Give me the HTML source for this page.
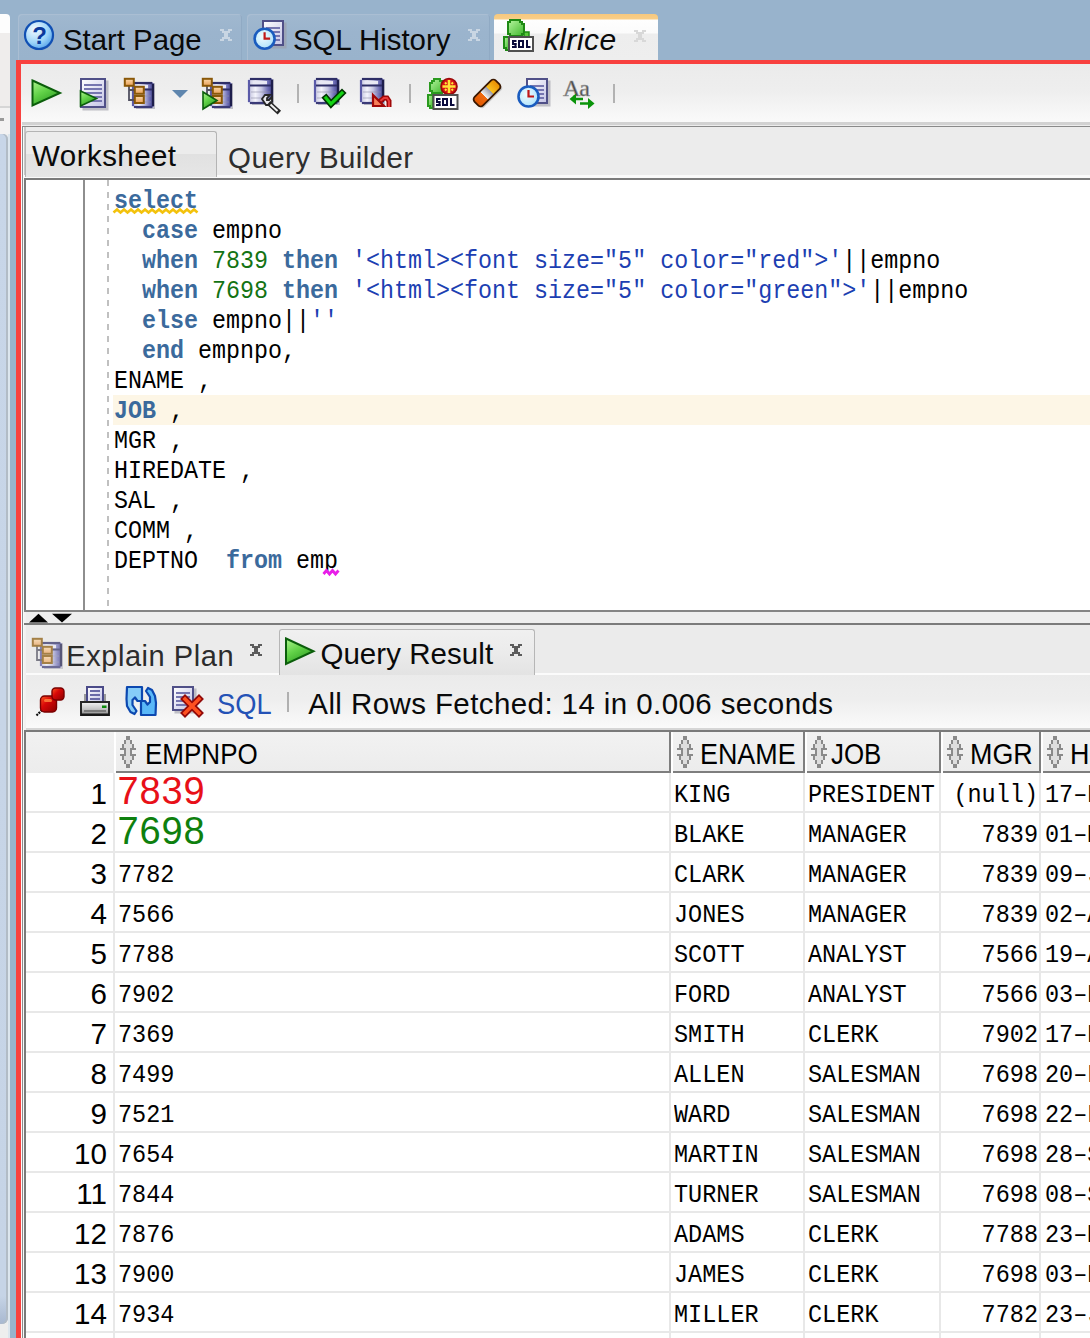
<!DOCTYPE html>
<html><head><meta charset="utf-8">
<style>
html,body{margin:0;padding:0;}
body{width:1090px;height:1338px;overflow:hidden;position:relative;background:#98b3cc;font-family:"Liberation Sans",sans-serif;}
.a{position:absolute;}
.t{position:absolute;white-space:pre;line-height:1;}
</style></head><body>
<div class="a" style="left:0px;top:14px;width:10px;height:20px;background:#fdfdfd;border-top-right-radius:4px;"></div>
<div class="a" style="left:0px;top:33px;width:10px;height:74px;background:#efedec;"></div>
<div class="a" style="left:0px;top:106px;width:10px;height:2px;background:#d6d6d6;"></div>
<div class="a" style="left:0px;top:108px;width:10px;height:27px;background:#f3f2f2;"></div>
<div class="a" style="left:0px;top:118px;width:4px;height:3px;background:#9a9a9a;"></div>
<div class="a" style="left:0px;top:134px;width:10px;height:1204px;background:#eeeeee;"></div>
<div class="a" style="left:8px;top:134px;width:2px;height:1204px;background:#dce6ee;"></div>
<div class="a" style="left:0px;top:134px;width:8px;height:1190px;background:linear-gradient(#c8d6e8 0,#c6d4e6 calc(100% - 28px),#a8b8d0 100%);border-radius:0 5px 6px 0;box-shadow:inset -2px 0 0 #b2bcc6;"></div>
<div class="a" style="left:18px;top:14px;width:224px;height:46px;background:linear-gradient(#a0b8cf,#9bb4cd 40%,#99b3cc);border-radius:4px 4px 0 0;box-shadow:inset 1px 1px 0 #aabed3, inset -1px 0 0 #90aac4;"></div>
<div class="a" style="left:247px;top:14px;width:243px;height:46px;background:linear-gradient(#a0b8cf,#9bb4cd 40%,#99b3cc);border-radius:4px 4px 0 0;box-shadow:inset 1px 1px 0 #aabed3, inset -1px 0 0 #90aac4;"></div>
<div class="a" style="left:494px;top:14px;width:164px;height:46px;background:linear-gradient(#f6c87e 0,#f8ce88 5px,#fefefe 6px,#fbfbfb 19px,#ededed 20px,#eeeeee 46px);border-radius:4px 4px 0 0;"></div>
<div class="t" style="left:63.1px;top:25px;font-family:'Liberation Sans';font-size:30px;letter-spacing:0px;color:#0a0a0a;transform:scaleX(0.9775);transform-origin:0 0;">Start Page</div>
<div class="t" style="left:293.1px;top:25px;font-family:'Liberation Sans';font-size:30px;letter-spacing:0px;color:#0a0a0a;transform:scaleX(0.9804);transform-origin:0 0;">SQL History</div>
<div class="t" style="left:543.8px;top:25px;font-family:'Liberation Sans';font-size:30px;letter-spacing:0.48px;color:#0a0a0a;font-style:italic">klrice</div>
<div class="a" style="left:16px;top:60px;width:1074px;height:4px;background:#f8413f;"></div>
<div class="a" style="left:16px;top:60px;width:4.5px;height:1278px;background:#f8413f;"></div>
<div class="a" style="left:20.5px;top:64px;width:1069.5px;height:1274px;background:#f2f2f2;"></div>
<div class="a" style="left:20.5px;top:64px;width:1.5px;height:1274px;background:#fcfafa;"></div>
<div class="a" style="left:22px;top:126px;width:1px;height:1212px;background:#8c8c8c;"></div>
<div class="a" style="left:23px;top:126px;width:1px;height:1212px;background:#fafafa;"></div>
<div class="a" style="left:21px;top:64px;width:1069px;height:58px;background:linear-gradient(#ebebeb,#eeeeee 45%,#fafafa);"></div>
<div class="a" style="left:22px;top:122px;width:1068px;height:3px;background:#d2d2d2;"></div>
<div class="a" style="left:22px;top:125px;width:1068px;height:1px;background:#ededed;"></div>
<div class="a" style="left:22px;top:126px;width:1068px;height:1px;background:#8a8a8a;"></div>
<div class="a" style="left:24px;top:127px;width:1066px;height:48px;background:#ececec;"></div>
<div class="a" style="left:24px;top:127px;width:2px;height:51px;background:#c8c8c8;"></div>
<div class="a" style="left:24px;top:175px;width:1066px;height:3px;background:#fafafa;"></div>
<div class="a" style="left:25px;top:131px;width:192px;height:46px;background:linear-gradient(#ececec,#ececec 48%,#e1e1e1 50%,#e6e6e6);border:1px solid #b4b4b4;border-bottom:none;border-radius:3px 3px 0 0;box-sizing:border-box;"></div>
<div class="t" style="left:32.1px;top:141px;font-family:'Liberation Sans';font-size:29.5px;letter-spacing:0.44px;color:#0a0a0a;">Worksheet</div>
<div class="t" style="left:228.1px;top:143px;font-family:'Liberation Sans';font-size:29.5px;letter-spacing:0.38px;color:#2e2e2e;">Query Builder</div>
<div class="a" style="left:24px;top:178px;width:1066px;height:2px;background:#7b7b7b;"></div>
<div class="a" style="left:24px;top:178px;width:2px;height:434px;background:#7b7b7b;"></div>
<div class="a" style="left:26px;top:180px;width:1064px;height:430px;background:#ffffff;"></div>
<div class="a" style="left:83px;top:180px;width:2px;height:431px;background:#8e8e8e;"></div>
<div class="a" style="left:107px;top:180px;width:2px;height:430px;background:repeating-linear-gradient(#c0c0c0 0,#c0c0c0 6px,transparent 6px,transparent 12px);"></div>
<div class="a" style="left:113px;top:395px;width:977px;height:30px;background:#fdf6e6;"></div>
<div class="t" style="left:114.0px;top:187.5px;font-family:'Liberation Mono';font-size:26px;letter-spacing:0px;color:#000;transform:scaleX(0.8974);transform-origin:0 0;"><span style="color:#3b6a9c;font-weight:bold">select</span></div>
<div class="t" style="left:114.0px;top:217.5px;font-family:'Liberation Mono';font-size:26px;letter-spacing:0px;color:#000;transform:scaleX(0.8974);transform-origin:0 0;"><span>  </span><span style="color:#3b6a9c;font-weight:bold">case</span><span> empno</span></div>
<div class="t" style="left:114.0px;top:247.5px;font-family:'Liberation Mono';font-size:26px;letter-spacing:0px;color:#000;transform:scaleX(0.8974);transform-origin:0 0;"><span>  </span><span style="color:#3b6a9c;font-weight:bold">when</span><span> </span><span style="color:#137313">7839</span><span> </span><span style="color:#3b6a9c;font-weight:bold">then</span><span> </span><span style="color:#1d3fb2">'&lt;html&gt;&lt;font size="5" color="red"&gt;'</span><span>||empno</span></div>
<div class="t" style="left:114.0px;top:277.5px;font-family:'Liberation Mono';font-size:26px;letter-spacing:0px;color:#000;transform:scaleX(0.8974);transform-origin:0 0;"><span>  </span><span style="color:#3b6a9c;font-weight:bold">when</span><span> </span><span style="color:#137313">7698</span><span> </span><span style="color:#3b6a9c;font-weight:bold">then</span><span> </span><span style="color:#1d3fb2">'&lt;html&gt;&lt;font size="5" color="green"&gt;'</span><span>||empno</span></div>
<div class="t" style="left:114.0px;top:307.5px;font-family:'Liberation Mono';font-size:26px;letter-spacing:0px;color:#000;transform:scaleX(0.8974);transform-origin:0 0;"><span>  </span><span style="color:#3b6a9c;font-weight:bold">else</span><span> empno||</span><span style="color:#1d3fb2">''</span></div>
<div class="t" style="left:114.0px;top:337.5px;font-family:'Liberation Mono';font-size:26px;letter-spacing:0px;color:#000;transform:scaleX(0.8974);transform-origin:0 0;"><span>  </span><span style="color:#3b6a9c;font-weight:bold">end</span><span> empnpo,</span></div>
<div class="t" style="left:114.0px;top:367.5px;font-family:'Liberation Mono';font-size:26px;letter-spacing:0px;color:#000;transform:scaleX(0.8974);transform-origin:0 0;"><span>ENAME ,</span></div>
<div class="t" style="left:114.0px;top:397.5px;font-family:'Liberation Mono';font-size:26px;letter-spacing:0px;color:#000;transform:scaleX(0.8974);transform-origin:0 0;"><span style="color:#3b6a9c;font-weight:bold">JOB</span><span> ,</span></div>
<div class="t" style="left:114.0px;top:427.5px;font-family:'Liberation Mono';font-size:26px;letter-spacing:0px;color:#000;transform:scaleX(0.8974);transform-origin:0 0;"><span>MGR ,</span></div>
<div class="t" style="left:114.0px;top:457.5px;font-family:'Liberation Mono';font-size:26px;letter-spacing:0px;color:#000;transform:scaleX(0.8974);transform-origin:0 0;"><span>HIREDATE ,</span></div>
<div class="t" style="left:114.0px;top:487.5px;font-family:'Liberation Mono';font-size:26px;letter-spacing:0px;color:#000;transform:scaleX(0.8974);transform-origin:0 0;"><span>SAL ,</span></div>
<div class="t" style="left:114.0px;top:517.5px;font-family:'Liberation Mono';font-size:26px;letter-spacing:0px;color:#000;transform:scaleX(0.8974);transform-origin:0 0;"><span>COMM ,</span></div>
<div class="t" style="left:114.0px;top:547.5px;font-family:'Liberation Mono';font-size:26px;letter-spacing:0px;color:#000;transform:scaleX(0.8974);transform-origin:0 0;"><span>DEPTNO  </span><span style="color:#3b6a9c;font-weight:bold">from</span><span> emp</span></div>
<svg class="a" style="left:0;top:0" width="1090" height="700"><path d="M113.5 212.5 l3.5 -3 l3.5 3 l3.5 -3 l3.5 3 l3.5 -3 l3.5 3 l3.5 -3 l3.5 3 l3.5 -3 l3.5 3 l3.5 -3 l3.5 3 l3.5 -3 l3.5 3 l3.5 -3 l3.5 3 l3.5 -3 l3.5 3 l3.5 -3 l3.5 3 l3.5 -3 l3.5 3 l3.5 -3 l3.5 3" stroke="#f3c20c" stroke-width="2.6" fill="none"/><path d="M323.5 574 l3 -3.5 l3 3.5 l3 -3.5 l3 3.5 l3 -3.5" stroke="#e81ee8" stroke-width="2.8" fill="none"/></svg>
<div class="a" style="left:24px;top:610px;width:1066px;height:2px;background:#858585;"></div>
<div class="a" style="left:26px;top:612px;width:1064px;height:11px;background:#eeeeee;"></div>
<svg class="a" style="left:0;top:600px" width="100" height="30"><polygon points="29,22.5 38.5,13.8 48,22.5" fill="#000"/><polygon points="52,13.8 72,13.8 62,22.5" fill="#000"/></svg>
<div class="a" style="left:24px;top:623px;width:1066px;height:2px;background:#7b7b7b;"></div>
<div class="a" style="left:26px;top:625px;width:1064px;height:48px;background:#ebebeb;"></div>
<div class="a" style="left:26px;top:673px;width:1064px;height:2px;background:#fbfbfb;"></div>
<div class="a" style="left:279px;top:629px;width:256px;height:46px;background:linear-gradient(#f0f0f0,#ebebeb 50%,#e3e3e3);border:1px solid #b6b6b6;border-bottom:none;border-radius:3px 3px 0 0;box-sizing:border-box;"></div>
<div class="t" style="left:66.3px;top:642px;font-family:'Liberation Sans';font-size:29px;letter-spacing:0.55px;color:#2c2c2c;">Explain Plan</div>
<div class="t" style="left:320.4px;top:638.5px;font-family:'Liberation Sans';font-size:29.5px;letter-spacing:0.05px;color:#0a0a0a;">Query Result</div>
<div class="a" style="left:26px;top:675px;width:1064px;height:53px;background:linear-gradient(#ebebeb,#eeeeee 45%,#fafafa);"></div>
<div class="t" style="left:217.1px;top:689px;font-family:'Liberation Sans';font-size:29.5px;letter-spacing:0px;color:#2452b6;transform:scaleX(0.925);transform-origin:0 0;">SQL</div>
<div class="a" style="left:287px;top:692px;width:2px;height:20px;background:#b0b0b0;"></div>
<div class="t" style="left:308.3px;top:689px;font-family:'Liberation Sans';font-size:29.5px;letter-spacing:0.41px;color:#0a0a0a;">All Rows Fetched: 14 in 0.006 seconds</div>
<div class="a" style="left:26px;top:728px;width:1064px;height:2px;background:#d6d6d6;"></div>
<div class="a" style="left:24px;top:730px;width:1066px;height:608px;background:#ffffff;"></div>
<div class="a" style="left:24px;top:730px;width:1066px;height:2px;background:#7a7a7a;"></div>
<div class="a" style="left:24px;top:730px;width:2px;height:608px;background:#7a7a7a;"></div>
<div class="a" style="left:26px;top:732px;width:88px;height:41px;background:linear-gradient(#f1f1f1,#ececec);"></div>
<div class="a" style="left:114px;top:732px;width:557px;height:41px;background:#ffffff;"></div>
<div class="a" style="left:116px;top:732px;width:553px;height:39px;background:linear-gradient(#f2f2f2,#ececec);"></div>
<div class="a" style="left:116px;top:771px;width:555px;height:2px;background:#7e7e7e;"></div>
<div class="a" style="left:669px;top:732px;width:2px;height:41px;background:#7e7e7e;"></div>
<svg class="a" style="left:120px;top:736px" width="16" height="32" viewBox="0 0 8 16" shape-rendering="crispEdges"><path d="M3 2h2v12h-2zM2 4h1v2h-1zM5 4h1v2h-1zM2 10h1v2h-1zM5 10h1v2h-1z" fill="#dedede"/><path d="M3 0h2v2h-2zM2 2h1v2h-1zM5 2h1v2h-1zM1 4h1v2h-1zM6 4h1v2h-1zM0 6h3v1h-3zM5 6h3v1h-3zM2 7h1v2h-1zM5 7h1v2h-1zM0 9h3v1h-3zM5 9h3v1h-3zM1 10h1v2h-1zM6 10h1v2h-1zM2 12h1v2h-1zM5 12h1v2h-1zM3 14h2v2h-2z" fill="#8a8a8a"/></svg>
<div class="t" style="left:144.8px;top:740px;font-family:'Liberation Sans';font-size:29.2px;letter-spacing:0px;color:#000;transform:scaleX(0.8911);transform-origin:0 0;">EMPNPO</div>
<div class="a" style="left:671px;top:732px;width:134px;height:41px;background:#ffffff;"></div>
<div class="a" style="left:673px;top:732px;width:130px;height:39px;background:linear-gradient(#f2f2f2,#ececec);"></div>
<div class="a" style="left:673px;top:771px;width:132px;height:2px;background:#7e7e7e;"></div>
<div class="a" style="left:803px;top:732px;width:2px;height:41px;background:#7e7e7e;"></div>
<svg class="a" style="left:677px;top:736px" width="16" height="32" viewBox="0 0 8 16" shape-rendering="crispEdges"><path d="M3 2h2v12h-2zM2 4h1v2h-1zM5 4h1v2h-1zM2 10h1v2h-1zM5 10h1v2h-1z" fill="#dedede"/><path d="M3 0h2v2h-2zM2 2h1v2h-1zM5 2h1v2h-1zM1 4h1v2h-1zM6 4h1v2h-1zM0 6h3v1h-3zM5 6h3v1h-3zM2 7h1v2h-1zM5 7h1v2h-1zM0 9h3v1h-3zM5 9h3v1h-3zM1 10h1v2h-1zM6 10h1v2h-1zM2 12h1v2h-1zM5 12h1v2h-1zM3 14h2v2h-2z" fill="#8a8a8a"/></svg>
<div class="t" style="left:700.2px;top:740px;font-family:'Liberation Sans';font-size:29.2px;letter-spacing:0px;color:#000;transform:scaleX(0.9208);transform-origin:0 0;">ENAME</div>
<div class="a" style="left:805px;top:732px;width:136px;height:41px;background:#ffffff;"></div>
<div class="a" style="left:807px;top:732px;width:132px;height:39px;background:linear-gradient(#f2f2f2,#ececec);"></div>
<div class="a" style="left:807px;top:771px;width:134px;height:2px;background:#7e7e7e;"></div>
<div class="a" style="left:939px;top:732px;width:2px;height:41px;background:#7e7e7e;"></div>
<svg class="a" style="left:811px;top:736px" width="16" height="32" viewBox="0 0 8 16" shape-rendering="crispEdges"><path d="M3 2h2v12h-2zM2 4h1v2h-1zM5 4h1v2h-1zM2 10h1v2h-1zM5 10h1v2h-1z" fill="#dedede"/><path d="M3 0h2v2h-2zM2 2h1v2h-1zM5 2h1v2h-1zM1 4h1v2h-1zM6 4h1v2h-1zM0 6h3v1h-3zM5 6h3v1h-3zM2 7h1v2h-1zM5 7h1v2h-1zM0 9h3v1h-3zM5 9h3v1h-3zM1 10h1v2h-1zM6 10h1v2h-1zM2 12h1v2h-1zM5 12h1v2h-1zM3 14h2v2h-2z" fill="#8a8a8a"/></svg>
<div class="t" style="left:830.5px;top:740px;font-family:'Liberation Sans';font-size:29.2px;letter-spacing:0px;color:#000;transform:scaleX(0.887);transform-origin:0 0;">JOB</div>
<div class="a" style="left:941px;top:732px;width:100px;height:41px;background:#ffffff;"></div>
<div class="a" style="left:943px;top:732px;width:96px;height:39px;background:linear-gradient(#f2f2f2,#ececec);"></div>
<div class="a" style="left:943px;top:771px;width:98px;height:2px;background:#7e7e7e;"></div>
<div class="a" style="left:1039px;top:732px;width:2px;height:41px;background:#7e7e7e;"></div>
<svg class="a" style="left:947px;top:736px" width="16" height="32" viewBox="0 0 8 16" shape-rendering="crispEdges"><path d="M3 2h2v12h-2zM2 4h1v2h-1zM5 4h1v2h-1zM2 10h1v2h-1zM5 10h1v2h-1z" fill="#dedede"/><path d="M3 0h2v2h-2zM2 2h1v2h-1zM5 2h1v2h-1zM1 4h1v2h-1zM6 4h1v2h-1zM0 6h3v1h-3zM5 6h3v1h-3zM2 7h1v2h-1zM5 7h1v2h-1zM0 9h3v1h-3zM5 9h3v1h-3zM1 10h1v2h-1zM6 10h1v2h-1zM2 12h1v2h-1zM5 12h1v2h-1zM3 14h2v2h-2z" fill="#8a8a8a"/></svg>
<div class="t" style="left:970.2px;top:740px;font-size:29.2px;color:#000;transform:scaleX(0.9208);transform-origin:0 0">MGR</div>
<div class="a" style="left:1041px;top:732px;width:259px;height:41px;background:#ffffff;"></div>
<div class="a" style="left:1043px;top:732px;width:255px;height:39px;background:linear-gradient(#f2f2f2,#ececec);"></div>
<div class="a" style="left:1043px;top:771px;width:257px;height:2px;background:#7e7e7e;"></div>
<div class="a" style="left:1298px;top:732px;width:2px;height:41px;background:#7e7e7e;"></div>
<svg class="a" style="left:1047px;top:736px" width="16" height="32" viewBox="0 0 8 16" shape-rendering="crispEdges"><path d="M3 2h2v12h-2zM2 4h1v2h-1zM5 4h1v2h-1zM2 10h1v2h-1zM5 10h1v2h-1z" fill="#dedede"/><path d="M3 0h2v2h-2zM2 2h1v2h-1zM5 2h1v2h-1zM1 4h1v2h-1zM6 4h1v2h-1zM0 6h3v1h-3zM5 6h3v1h-3zM2 7h1v2h-1zM5 7h1v2h-1zM0 9h3v1h-3zM5 9h3v1h-3zM1 10h1v2h-1zM6 10h1v2h-1zM2 12h1v2h-1zM5 12h1v2h-1zM3 14h2v2h-2z" fill="#8a8a8a"/></svg>
<div class="t" style="left:1070.2px;top:740px;font-size:29.2px;color:#000;transform:scaleX(0.9208);transform-origin:0 0">HIREDATE</div>
<div class="a" style="left:26px;top:811px;width:1064px;height:2px;background:#e8e8e8;"></div>
<div class="t" style="left:24px;width:83px;text-align:right;top:778.6px;font-size:29.6px;color:#000;">1</div>
<div class="t" style="left:117.5px;top:772px;font-size:38px;letter-spacing:0.83px;color:#e81018;">7839</div>
<div class="t" style="left:674px;top:782px;font-family:'Liberation Mono';font-size:26px;letter-spacing:0px;color:#000;transform:scaleX(0.9038);transform-origin:0 0;">KING</div>
<div class="t" style="left:808px;top:782px;font-family:'Liberation Mono';font-size:26px;letter-spacing:0px;color:#000;transform:scaleX(0.9038);transform-origin:0 0;">PRESIDENT</div>
<div class="t" style="left:880px;top:782px;font-family:'Liberation Mono';font-size:26px;letter-spacing:0px;color:#000;transform:scaleX(0.9038);transform-origin:100% 0;width:158px;text-align:right;">(null)</div>
<div class="t" style="left:1045px;top:782px;font-family:'Liberation Mono';font-size:26px;letter-spacing:0px;color:#000;transform:scaleX(0.9038);transform-origin:0 0;">17–NOV–81</div>
<div class="a" style="left:26px;top:851px;width:1064px;height:2px;background:#e8e8e8;"></div>
<div class="t" style="left:24px;width:83px;text-align:right;top:818.6px;font-size:29.6px;color:#000;">2</div>
<div class="t" style="left:117.5px;top:812px;font-size:38px;letter-spacing:0.83px;color:#0e800e;">7698</div>
<div class="t" style="left:674px;top:822px;font-family:'Liberation Mono';font-size:26px;letter-spacing:0px;color:#000;transform:scaleX(0.9038);transform-origin:0 0;">BLAKE</div>
<div class="t" style="left:808px;top:822px;font-family:'Liberation Mono';font-size:26px;letter-spacing:0px;color:#000;transform:scaleX(0.9038);transform-origin:0 0;">MANAGER</div>
<div class="t" style="left:880px;top:822px;font-family:'Liberation Mono';font-size:26px;letter-spacing:0px;color:#000;transform:scaleX(0.9038);transform-origin:100% 0;width:158px;text-align:right;">7839</div>
<div class="t" style="left:1045px;top:822px;font-family:'Liberation Mono';font-size:26px;letter-spacing:0px;color:#000;transform:scaleX(0.9038);transform-origin:0 0;">01–MAY–81</div>
<div class="a" style="left:26px;top:891px;width:1064px;height:2px;background:#e8e8e8;"></div>
<div class="t" style="left:24px;width:83px;text-align:right;top:858.6px;font-size:29.6px;color:#000;">3</div>
<div class="t" style="left:118px;top:862px;font-family:'Liberation Mono';font-size:26px;letter-spacing:0px;color:#000;transform:scaleX(0.9038);transform-origin:0 0;">7782</div>
<div class="t" style="left:674px;top:862px;font-family:'Liberation Mono';font-size:26px;letter-spacing:0px;color:#000;transform:scaleX(0.9038);transform-origin:0 0;">CLARK</div>
<div class="t" style="left:808px;top:862px;font-family:'Liberation Mono';font-size:26px;letter-spacing:0px;color:#000;transform:scaleX(0.9038);transform-origin:0 0;">MANAGER</div>
<div class="t" style="left:880px;top:862px;font-family:'Liberation Mono';font-size:26px;letter-spacing:0px;color:#000;transform:scaleX(0.9038);transform-origin:100% 0;width:158px;text-align:right;">7839</div>
<div class="t" style="left:1045px;top:862px;font-family:'Liberation Mono';font-size:26px;letter-spacing:0px;color:#000;transform:scaleX(0.9038);transform-origin:0 0;">09–JUN–81</div>
<div class="a" style="left:26px;top:931px;width:1064px;height:2px;background:#e8e8e8;"></div>
<div class="t" style="left:24px;width:83px;text-align:right;top:898.6px;font-size:29.6px;color:#000;">4</div>
<div class="t" style="left:118px;top:902px;font-family:'Liberation Mono';font-size:26px;letter-spacing:0px;color:#000;transform:scaleX(0.9038);transform-origin:0 0;">7566</div>
<div class="t" style="left:674px;top:902px;font-family:'Liberation Mono';font-size:26px;letter-spacing:0px;color:#000;transform:scaleX(0.9038);transform-origin:0 0;">JONES</div>
<div class="t" style="left:808px;top:902px;font-family:'Liberation Mono';font-size:26px;letter-spacing:0px;color:#000;transform:scaleX(0.9038);transform-origin:0 0;">MANAGER</div>
<div class="t" style="left:880px;top:902px;font-family:'Liberation Mono';font-size:26px;letter-spacing:0px;color:#000;transform:scaleX(0.9038);transform-origin:100% 0;width:158px;text-align:right;">7839</div>
<div class="t" style="left:1045px;top:902px;font-family:'Liberation Mono';font-size:26px;letter-spacing:0px;color:#000;transform:scaleX(0.9038);transform-origin:0 0;">02–APR–81</div>
<div class="a" style="left:26px;top:971px;width:1064px;height:2px;background:#e8e8e8;"></div>
<div class="t" style="left:24px;width:83px;text-align:right;top:938.6px;font-size:29.6px;color:#000;">5</div>
<div class="t" style="left:118px;top:942px;font-family:'Liberation Mono';font-size:26px;letter-spacing:0px;color:#000;transform:scaleX(0.9038);transform-origin:0 0;">7788</div>
<div class="t" style="left:674px;top:942px;font-family:'Liberation Mono';font-size:26px;letter-spacing:0px;color:#000;transform:scaleX(0.9038);transform-origin:0 0;">SCOTT</div>
<div class="t" style="left:808px;top:942px;font-family:'Liberation Mono';font-size:26px;letter-spacing:0px;color:#000;transform:scaleX(0.9038);transform-origin:0 0;">ANALYST</div>
<div class="t" style="left:880px;top:942px;font-family:'Liberation Mono';font-size:26px;letter-spacing:0px;color:#000;transform:scaleX(0.9038);transform-origin:100% 0;width:158px;text-align:right;">7566</div>
<div class="t" style="left:1045px;top:942px;font-family:'Liberation Mono';font-size:26px;letter-spacing:0px;color:#000;transform:scaleX(0.9038);transform-origin:0 0;">19–APR–87</div>
<div class="a" style="left:26px;top:1011px;width:1064px;height:2px;background:#e8e8e8;"></div>
<div class="t" style="left:24px;width:83px;text-align:right;top:978.6px;font-size:29.6px;color:#000;">6</div>
<div class="t" style="left:118px;top:982px;font-family:'Liberation Mono';font-size:26px;letter-spacing:0px;color:#000;transform:scaleX(0.9038);transform-origin:0 0;">7902</div>
<div class="t" style="left:674px;top:982px;font-family:'Liberation Mono';font-size:26px;letter-spacing:0px;color:#000;transform:scaleX(0.9038);transform-origin:0 0;">FORD</div>
<div class="t" style="left:808px;top:982px;font-family:'Liberation Mono';font-size:26px;letter-spacing:0px;color:#000;transform:scaleX(0.9038);transform-origin:0 0;">ANALYST</div>
<div class="t" style="left:880px;top:982px;font-family:'Liberation Mono';font-size:26px;letter-spacing:0px;color:#000;transform:scaleX(0.9038);transform-origin:100% 0;width:158px;text-align:right;">7566</div>
<div class="t" style="left:1045px;top:982px;font-family:'Liberation Mono';font-size:26px;letter-spacing:0px;color:#000;transform:scaleX(0.9038);transform-origin:0 0;">03–DEC–81</div>
<div class="a" style="left:26px;top:1051px;width:1064px;height:2px;background:#e8e8e8;"></div>
<div class="t" style="left:24px;width:83px;text-align:right;top:1018.6px;font-size:29.6px;color:#000;">7</div>
<div class="t" style="left:118px;top:1022px;font-family:'Liberation Mono';font-size:26px;letter-spacing:0px;color:#000;transform:scaleX(0.9038);transform-origin:0 0;">7369</div>
<div class="t" style="left:674px;top:1022px;font-family:'Liberation Mono';font-size:26px;letter-spacing:0px;color:#000;transform:scaleX(0.9038);transform-origin:0 0;">SMITH</div>
<div class="t" style="left:808px;top:1022px;font-family:'Liberation Mono';font-size:26px;letter-spacing:0px;color:#000;transform:scaleX(0.9038);transform-origin:0 0;">CLERK</div>
<div class="t" style="left:880px;top:1022px;font-family:'Liberation Mono';font-size:26px;letter-spacing:0px;color:#000;transform:scaleX(0.9038);transform-origin:100% 0;width:158px;text-align:right;">7902</div>
<div class="t" style="left:1045px;top:1022px;font-family:'Liberation Mono';font-size:26px;letter-spacing:0px;color:#000;transform:scaleX(0.9038);transform-origin:0 0;">17–DEC–80</div>
<div class="a" style="left:26px;top:1091px;width:1064px;height:2px;background:#e8e8e8;"></div>
<div class="t" style="left:24px;width:83px;text-align:right;top:1058.6px;font-size:29.6px;color:#000;">8</div>
<div class="t" style="left:118px;top:1062px;font-family:'Liberation Mono';font-size:26px;letter-spacing:0px;color:#000;transform:scaleX(0.9038);transform-origin:0 0;">7499</div>
<div class="t" style="left:674px;top:1062px;font-family:'Liberation Mono';font-size:26px;letter-spacing:0px;color:#000;transform:scaleX(0.9038);transform-origin:0 0;">ALLEN</div>
<div class="t" style="left:808px;top:1062px;font-family:'Liberation Mono';font-size:26px;letter-spacing:0px;color:#000;transform:scaleX(0.9038);transform-origin:0 0;">SALESMAN</div>
<div class="t" style="left:880px;top:1062px;font-family:'Liberation Mono';font-size:26px;letter-spacing:0px;color:#000;transform:scaleX(0.9038);transform-origin:100% 0;width:158px;text-align:right;">7698</div>
<div class="t" style="left:1045px;top:1062px;font-family:'Liberation Mono';font-size:26px;letter-spacing:0px;color:#000;transform:scaleX(0.9038);transform-origin:0 0;">20–FEB–81</div>
<div class="a" style="left:26px;top:1131px;width:1064px;height:2px;background:#e8e8e8;"></div>
<div class="t" style="left:24px;width:83px;text-align:right;top:1098.6px;font-size:29.6px;color:#000;">9</div>
<div class="t" style="left:118px;top:1102px;font-family:'Liberation Mono';font-size:26px;letter-spacing:0px;color:#000;transform:scaleX(0.9038);transform-origin:0 0;">7521</div>
<div class="t" style="left:674px;top:1102px;font-family:'Liberation Mono';font-size:26px;letter-spacing:0px;color:#000;transform:scaleX(0.9038);transform-origin:0 0;">WARD</div>
<div class="t" style="left:808px;top:1102px;font-family:'Liberation Mono';font-size:26px;letter-spacing:0px;color:#000;transform:scaleX(0.9038);transform-origin:0 0;">SALESMAN</div>
<div class="t" style="left:880px;top:1102px;font-family:'Liberation Mono';font-size:26px;letter-spacing:0px;color:#000;transform:scaleX(0.9038);transform-origin:100% 0;width:158px;text-align:right;">7698</div>
<div class="t" style="left:1045px;top:1102px;font-family:'Liberation Mono';font-size:26px;letter-spacing:0px;color:#000;transform:scaleX(0.9038);transform-origin:0 0;">22–FEB–81</div>
<div class="a" style="left:26px;top:1171px;width:1064px;height:2px;background:#e8e8e8;"></div>
<div class="t" style="left:24px;width:83px;text-align:right;top:1138.6px;font-size:29.6px;color:#000;">10</div>
<div class="t" style="left:118px;top:1142px;font-family:'Liberation Mono';font-size:26px;letter-spacing:0px;color:#000;transform:scaleX(0.9038);transform-origin:0 0;">7654</div>
<div class="t" style="left:674px;top:1142px;font-family:'Liberation Mono';font-size:26px;letter-spacing:0px;color:#000;transform:scaleX(0.9038);transform-origin:0 0;">MARTIN</div>
<div class="t" style="left:808px;top:1142px;font-family:'Liberation Mono';font-size:26px;letter-spacing:0px;color:#000;transform:scaleX(0.9038);transform-origin:0 0;">SALESMAN</div>
<div class="t" style="left:880px;top:1142px;font-family:'Liberation Mono';font-size:26px;letter-spacing:0px;color:#000;transform:scaleX(0.9038);transform-origin:100% 0;width:158px;text-align:right;">7698</div>
<div class="t" style="left:1045px;top:1142px;font-family:'Liberation Mono';font-size:26px;letter-spacing:0px;color:#000;transform:scaleX(0.9038);transform-origin:0 0;">28–SEP–81</div>
<div class="a" style="left:26px;top:1211px;width:1064px;height:2px;background:#e8e8e8;"></div>
<div class="t" style="left:24px;width:83px;text-align:right;top:1178.6px;font-size:29.6px;color:#000;">11</div>
<div class="t" style="left:118px;top:1182px;font-family:'Liberation Mono';font-size:26px;letter-spacing:0px;color:#000;transform:scaleX(0.9038);transform-origin:0 0;">7844</div>
<div class="t" style="left:674px;top:1182px;font-family:'Liberation Mono';font-size:26px;letter-spacing:0px;color:#000;transform:scaleX(0.9038);transform-origin:0 0;">TURNER</div>
<div class="t" style="left:808px;top:1182px;font-family:'Liberation Mono';font-size:26px;letter-spacing:0px;color:#000;transform:scaleX(0.9038);transform-origin:0 0;">SALESMAN</div>
<div class="t" style="left:880px;top:1182px;font-family:'Liberation Mono';font-size:26px;letter-spacing:0px;color:#000;transform:scaleX(0.9038);transform-origin:100% 0;width:158px;text-align:right;">7698</div>
<div class="t" style="left:1045px;top:1182px;font-family:'Liberation Mono';font-size:26px;letter-spacing:0px;color:#000;transform:scaleX(0.9038);transform-origin:0 0;">08–SEP–81</div>
<div class="a" style="left:26px;top:1251px;width:1064px;height:2px;background:#e8e8e8;"></div>
<div class="t" style="left:24px;width:83px;text-align:right;top:1218.6px;font-size:29.6px;color:#000;">12</div>
<div class="t" style="left:118px;top:1222px;font-family:'Liberation Mono';font-size:26px;letter-spacing:0px;color:#000;transform:scaleX(0.9038);transform-origin:0 0;">7876</div>
<div class="t" style="left:674px;top:1222px;font-family:'Liberation Mono';font-size:26px;letter-spacing:0px;color:#000;transform:scaleX(0.9038);transform-origin:0 0;">ADAMS</div>
<div class="t" style="left:808px;top:1222px;font-family:'Liberation Mono';font-size:26px;letter-spacing:0px;color:#000;transform:scaleX(0.9038);transform-origin:0 0;">CLERK</div>
<div class="t" style="left:880px;top:1222px;font-family:'Liberation Mono';font-size:26px;letter-spacing:0px;color:#000;transform:scaleX(0.9038);transform-origin:100% 0;width:158px;text-align:right;">7788</div>
<div class="t" style="left:1045px;top:1222px;font-family:'Liberation Mono';font-size:26px;letter-spacing:0px;color:#000;transform:scaleX(0.9038);transform-origin:0 0;">23–MAY–87</div>
<div class="a" style="left:26px;top:1291px;width:1064px;height:2px;background:#e8e8e8;"></div>
<div class="t" style="left:24px;width:83px;text-align:right;top:1258.6px;font-size:29.6px;color:#000;">13</div>
<div class="t" style="left:118px;top:1262px;font-family:'Liberation Mono';font-size:26px;letter-spacing:0px;color:#000;transform:scaleX(0.9038);transform-origin:0 0;">7900</div>
<div class="t" style="left:674px;top:1262px;font-family:'Liberation Mono';font-size:26px;letter-spacing:0px;color:#000;transform:scaleX(0.9038);transform-origin:0 0;">JAMES</div>
<div class="t" style="left:808px;top:1262px;font-family:'Liberation Mono';font-size:26px;letter-spacing:0px;color:#000;transform:scaleX(0.9038);transform-origin:0 0;">CLERK</div>
<div class="t" style="left:880px;top:1262px;font-family:'Liberation Mono';font-size:26px;letter-spacing:0px;color:#000;transform:scaleX(0.9038);transform-origin:100% 0;width:158px;text-align:right;">7698</div>
<div class="t" style="left:1045px;top:1262px;font-family:'Liberation Mono';font-size:26px;letter-spacing:0px;color:#000;transform:scaleX(0.9038);transform-origin:0 0;">03–DEC–81</div>
<div class="a" style="left:26px;top:1331px;width:1064px;height:2px;background:#e8e8e8;"></div>
<div class="t" style="left:24px;width:83px;text-align:right;top:1298.6px;font-size:29.6px;color:#000;">14</div>
<div class="t" style="left:118px;top:1302px;font-family:'Liberation Mono';font-size:26px;letter-spacing:0px;color:#000;transform:scaleX(0.9038);transform-origin:0 0;">7934</div>
<div class="t" style="left:674px;top:1302px;font-family:'Liberation Mono';font-size:26px;letter-spacing:0px;color:#000;transform:scaleX(0.9038);transform-origin:0 0;">MILLER</div>
<div class="t" style="left:808px;top:1302px;font-family:'Liberation Mono';font-size:26px;letter-spacing:0px;color:#000;transform:scaleX(0.9038);transform-origin:0 0;">CLERK</div>
<div class="t" style="left:880px;top:1302px;font-family:'Liberation Mono';font-size:26px;letter-spacing:0px;color:#000;transform:scaleX(0.9038);transform-origin:100% 0;width:158px;text-align:right;">7782</div>
<div class="t" style="left:1045px;top:1302px;font-family:'Liberation Mono';font-size:26px;letter-spacing:0px;color:#000;transform:scaleX(0.9038);transform-origin:0 0;">23–JAN–82</div>
<div class="a" style="left:113px;top:773px;width:2px;height:565px;background:#e8e8e8;"></div>
<div class="a" style="left:669px;top:773px;width:2px;height:565px;background:#e8e8e8;"></div>
<div class="a" style="left:803px;top:773px;width:2px;height:565px;background:#e8e8e8;"></div>
<div class="a" style="left:939px;top:773px;width:2px;height:565px;background:#e8e8e8;"></div>
<div class="a" style="left:1039px;top:773px;width:2px;height:565px;background:#e8e8e8;"></div>
<svg class="a" style="left:0;top:0;position:absolute" width="1090" height="1338" viewBox="0 0 1090 1338"><defs>
<linearGradient id="cylg" x1="0" x2="1" y1="0" y2="0"><stop offset="0" stop-color="#c0c0dc"/><stop offset="0.3" stop-color="#f4f4fc"/><stop offset="0.55" stop-color="#c4c4e2"/><stop offset="0.8" stop-color="#6e6eb6"/><stop offset="1" stop-color="#3a3a80"/></linearGradient>
<linearGradient id="cyltop" x1="0" x2="1"><stop offset="0" stop-color="#c8c8e4"/><stop offset="0.4" stop-color="#f6f6ff"/><stop offset="1" stop-color="#8a8ac0"/></linearGradient>
<linearGradient id="boxg" x1="0" x2="0" y1="0" y2="1"><stop offset="0" stop-color="#fcd8a8"/><stop offset="1" stop-color="#e8a058"/></linearGradient>
<linearGradient id="playg" x1="0" x2="0.6" y1="0" y2="1"><stop offset="0" stop-color="#aef58e"/><stop offset="0.5" stop-color="#62d248"/><stop offset="1" stop-color="#2e9e22"/></linearGradient>
<linearGradient id="docg" x1="0" x2="1" y1="0" y2="1"><stop offset="0" stop-color="#ffffff"/><stop offset="1" stop-color="#c4c4e6"/></linearGradient>
<radialGradient id="clockg" cx="0.4" cy="0.4" r="0.7"><stop offset="0" stop-color="#f0fcff"/><stop offset="1" stop-color="#a8e0fa"/></radialGradient>
<radialGradient id="helpg" cx="0.35" cy="0.3" r="0.8"><stop offset="0" stop-color="#f4fbff"/><stop offset="0.6" stop-color="#9cd4f8"/><stop offset="1" stop-color="#4a9ae8"/></radialGradient>
<linearGradient id="greeng" x1="0" x2="1" y1="0" y2="1"><stop offset="0" stop-color="#b8f4a0"/><stop offset="1" stop-color="#3cb82a"/></linearGradient>
<linearGradient id="printg" x1="0" x2="0" y1="0" y2="1"><stop offset="0" stop-color="#f4f4f4"/><stop offset="0.5" stop-color="#c8c8c8"/><stop offset="1" stop-color="#8a8a8a"/></linearGradient>
<linearGradient id="erg" x1="0" x2="1"><stop offset="0" stop-color="#e05800"/><stop offset="0.36" stop-color="#f06a10"/><stop offset="0.37" stop-color="#f4f4f4"/><stop offset="0.63" stop-color="#9a9aa8"/><stop offset="0.64" stop-color="#f8c020"/><stop offset="1" stop-color="#e88a00"/></linearGradient>
<linearGradient id="ping" x1="0" x2="1" y1="0" y2="1"><stop offset="0" stop-color="#ff5a20"/><stop offset="0.4" stop-color="#d80808"/><stop offset="1" stop-color="#8a0000"/></linearGradient>
</defs><circle cx="39.5" cy="36" r="14.5" fill="#8aa4bc" opacity="0.5"/><circle cx="39" cy="35" r="14" fill="url(#helpg)" stroke="#1150b4" stroke-width="2.2"/><text x="39.5" y="43.5" text-anchor="middle" font-family="Liberation Sans" font-weight="bold" font-size="24" fill="#0c3a9c">?</text><rect x="264.5" y="22.5" width="22" height="26" fill="#9c9ca8" opacity="0.6"/><rect x="263" y="21" width="20" height="24" fill="url(#docg)" stroke="#505088" stroke-width="2"/><rect x="266" y="27" width="14" height="2" fill="#7676b0"/><rect x="266" y="31" width="14" height="2" fill="#7676b0"/><rect x="266" y="35" width="14" height="2" fill="#7676b0"/><rect x="266" y="39" width="14" height="2" fill="#7676b0"/><circle cx="264.6" cy="38.7" r="10" fill="url(#clockg)" stroke="#1a5cbf" stroke-width="2.6"/><path d="M264.6 32.2 V38.7 H270.1" stroke="#c01818" stroke-width="2.2" fill="none"/><path d="M510 20 h10 v2 h2 v2 h2 v10 h-2 v2 h-12 v-2 h-2 v-12 h2 z" fill="url(#greeng)" stroke="#1e8a14" stroke-width="2"/><path d="M524 32 h5 v5 h-5 z" fill="#58c83a" stroke="#1e8a14" stroke-width="1.5"/><path d="M504 37 h5 v13 h-3 v-2 h-2 z" fill="url(#greeng)" stroke="#1e8a14" stroke-width="2"/><rect x="509" y="37" width="24" height="14" fill="#fff" stroke="#505050" stroke-width="2"/><g fill="#0a0a3c"><rect x="512" y="40" width="4.5" height="2"/><rect x="512" y="40" width="2" height="4"/><rect x="512" y="43" width="4.5" height="2"/><rect x="514.5" y="43" width="2" height="5"/><rect x="512" y="46" width="4.5" height="2"/><rect x="518" y="40" width="6" height="2"/><rect x="518" y="46" width="6" height="2"/><rect x="518" y="40" width="2" height="8"/><rect x="522" y="40" width="2" height="8"/><rect x="526" y="40" width="2" height="8"/><rect x="526" y="46" width="4.5" height="2"/></g><g fill="#c9d6e3" shape-rendering="crispEdges"><rect x="220" y="29" width="4" height="2"/><rect x="228" y="29" width="4" height="2"/><rect x="222" y="31" width="8" height="2"/><rect x="224" y="33" width="4" height="4"/><rect x="222" y="37" width="8" height="2"/><rect x="220" y="39" width="4" height="2"/><rect x="228" y="39" width="4" height="2"/></g><g fill="#c9d6e3" shape-rendering="crispEdges"><rect x="468" y="29" width="4" height="2"/><rect x="476" y="29" width="4" height="2"/><rect x="470" y="31" width="8" height="2"/><rect x="472" y="33" width="4" height="4"/><rect x="470" y="37" width="8" height="2"/><rect x="468" y="39" width="4" height="2"/><rect x="476" y="39" width="4" height="2"/></g><g fill="#d8d8d8" shape-rendering="crispEdges"><rect x="634" y="30" width="4" height="2"/><rect x="642" y="30" width="4" height="2"/><rect x="636" y="32" width="8" height="2"/><rect x="638" y="34" width="4" height="4"/><rect x="636" y="38" width="8" height="2"/><rect x="634" y="40" width="4" height="2"/><rect x="642" y="40" width="4" height="2"/></g><g fill="#5c5c5c" shape-rendering="crispEdges"><rect x="250" y="644" width="4" height="2"/><rect x="258" y="644" width="4" height="2"/><rect x="252" y="646" width="8" height="2"/><rect x="254" y="648" width="4" height="4"/><rect x="252" y="652" width="8" height="2"/><rect x="250" y="654" width="4" height="2"/><rect x="258" y="654" width="4" height="2"/></g><g fill="#5c5c5c" shape-rendering="crispEdges"><rect x="510" y="644" width="4" height="2"/><rect x="518" y="644" width="4" height="2"/><rect x="512" y="646" width="8" height="2"/><rect x="514" y="648" width="4" height="4"/><rect x="512" y="652" width="8" height="2"/><rect x="510" y="654" width="4" height="2"/><rect x="518" y="654" width="4" height="2"/></g><polygon points="32.5,80.5 60,93.0 32.5,105.5" fill="url(#playg)" stroke="#0b5e0b" stroke-width="2" stroke-linejoin="miter"/><rect x="82.5" y="80.5" width="26" height="30" fill="#9c9ca8" opacity="0.6"/><rect x="81" y="79" width="24" height="28" fill="url(#docg)" stroke="#505088" stroke-width="2"/><rect x="84" y="84" width="18" height="2" fill="#7676b0"/><rect x="84" y="88" width="18" height="2" fill="#7676b0"/><rect x="84" y="92" width="18" height="2" fill="#7676b0"/><rect x="84" y="96" width="18" height="2" fill="#7676b0"/><rect x="84" y="100" width="18" height="2" fill="#7676b0"/><polygon points="80.5,91 96.5,98.5 80.5,106" fill="url(#playg)" stroke="#0b5e0b" stroke-width="1.6" stroke-linejoin="miter"/><path d="M136 84 H154 V108 H136" stroke="#a8a8b4" stroke-width="2" fill="none" opacity="0.7"/><path d="M134 82 H152 L154 84 V106 L152 108 H134 L132 106 V84 Z" fill="url(#cylg)"/><path d="M133 84 V106" stroke="#5a5aa8" stroke-width="2.2"/><path d="M134 83 H152" stroke="#2e2e66" stroke-width="2.2"/><path d="M153 84 V106" stroke="#1e1e4c" stroke-width="2.2"/><path d="M134 107 H152" stroke="#3a3a78" stroke-width="2.2"/><rect x="137" y="85" width="11" height="3.5" fill="#e8e8f4"/><path d="M134 89.5 H152" stroke="#2e2e66" stroke-width="2"/><path d="M135 96 H151 M135 102 H151" stroke="#9090a8" stroke-width="1.2" opacity="0.6"/><path d="M129 85 V100 H135 M129 90 H135" stroke="#505060" stroke-width="1.8" fill="none"/><rect x="124.8" y="78.8" width="9" height="7" fill="url(#boxg)" stroke="#8a5808" stroke-width="2"/><rect x="134.8" y="86.8" width="9" height="7" fill="url(#boxg)" stroke="#8a5808" stroke-width="2"/><rect x="134.8" y="96" width="9" height="7" fill="url(#boxg)" stroke="#8a5808" stroke-width="2"/><polygon points="172,90 188,90 180,98" fill="#5f86ae"/><path d="M214 84 H232 V108 H214" stroke="#a8a8b4" stroke-width="2" fill="none" opacity="0.7"/><path d="M212 82 H230 L232 84 V106 L230 108 H212 L210 106 V84 Z" fill="url(#cylg)"/><path d="M211 84 V106" stroke="#5a5aa8" stroke-width="2.2"/><path d="M212 83 H230" stroke="#2e2e66" stroke-width="2.2"/><path d="M231 84 V106" stroke="#1e1e4c" stroke-width="2.2"/><path d="M212 107 H230" stroke="#3a3a78" stroke-width="2.2"/><rect x="215" y="85" width="11" height="3.5" fill="#e8e8f4"/><path d="M212 89.5 H230" stroke="#2e2e66" stroke-width="2"/><path d="M213 96 H229 M213 102 H229" stroke="#9090a8" stroke-width="1.2" opacity="0.6"/><path d="M207 85 V100 H213 M207 90 H213" stroke="#505060" stroke-width="1.8" fill="none"/><rect x="202.8" y="78.8" width="9" height="7" fill="url(#boxg)" stroke="#8a5808" stroke-width="2"/><rect x="212.8" y="86.8" width="9" height="7" fill="url(#boxg)" stroke="#8a5808" stroke-width="2"/><rect x="212.8" y="96" width="9" height="7" fill="url(#boxg)" stroke="#8a5808" stroke-width="2"/><polygon points="203,92 217,100.5 203,109" fill="url(#playg)" stroke="#0b5e0b" stroke-width="1.6" stroke-linejoin="miter"/><path d="M252 80 H273 V104 H252" stroke="#a8a8b4" stroke-width="2" fill="none" opacity="0.7"/><path d="M250 78 H271 L273 80 V102 L271 104 H250 L248 102 V80 Z" fill="url(#cylg)"/><path d="M249 80 V102" stroke="#5a5aa8" stroke-width="2.2"/><path d="M250 79 H271" stroke="#2e2e66" stroke-width="2.2"/><path d="M272 80 V102" stroke="#1e1e4c" stroke-width="2.2"/><path d="M250 103 H271" stroke="#3a3a78" stroke-width="2.2"/><rect x="253" y="81" width="14" height="3.5" fill="#e8e8f4"/><path d="M250 85.5 H271" stroke="#2e2e66" stroke-width="2"/><path d="M251 92 H270 M251 98 H270" stroke="#9090a8" stroke-width="1.2" opacity="0.6"/><path d="M271 104 l7 6" stroke="#909090" stroke-width="3" opacity="0.6" transform="translate(1.5 1.5)"/><path d="M262 99 l3 -4 h5 l-3 3 v2 h2 l3 -3 v5 l-3 3 h-3 z" fill="#e8e8ee" stroke="#262626" stroke-width="1.8" stroke-linejoin="miter"/><path d="M270.5 104.5 l7 6.5" stroke="#262626" stroke-width="5" stroke-linecap="square"/><path d="M270.5 104.5 l7 6.5" stroke="#f0f0f0" stroke-width="2"/><rect x="297" y="84" width="2" height="19" fill="#b2b2b2"/><rect x="409" y="84" width="2" height="19" fill="#b2b2b2"/><rect x="613" y="84" width="2" height="19" fill="#b2b2b2"/><path d="M318 80 H339 V104 H318" stroke="#a8a8b4" stroke-width="2" fill="none" opacity="0.7"/><path d="M316 78 H337 L339 80 V102 L337 104 H316 L314 102 V80 Z" fill="url(#cylg)"/><path d="M315 80 V102" stroke="#5a5aa8" stroke-width="2.2"/><path d="M316 79 H337" stroke="#2e2e66" stroke-width="2.2"/><path d="M338 80 V102" stroke="#1e1e4c" stroke-width="2.2"/><path d="M316 103 H337" stroke="#3a3a78" stroke-width="2.2"/><rect x="319" y="81" width="14" height="3.5" fill="#e8e8f4"/><path d="M316 85.5 H337" stroke="#2e2e66" stroke-width="2"/><path d="M317 92 H336 M317 98 H336" stroke="#9090a8" stroke-width="1.2" opacity="0.6"/><path d="M326 98 l5 6 l11 -11" stroke="#003800" stroke-width="6.5" fill="none" stroke-linecap="square"/><path d="M326 98 l5 6 l11 -11" stroke="#14d414" stroke-width="3.2" fill="none" stroke-linecap="square"/><path d="M364 80 H384 V104 H364" stroke="#a8a8b4" stroke-width="2" fill="none" opacity="0.7"/><path d="M362 78 H382 L384 80 V102 L382 104 H362 L360 102 V80 Z" fill="url(#cylg)"/><path d="M361 80 V102" stroke="#5a5aa8" stroke-width="2.2"/><path d="M362 79 H382" stroke="#2e2e66" stroke-width="2.2"/><path d="M383 80 V102" stroke="#1e1e4c" stroke-width="2.2"/><path d="M362 103 H382" stroke="#3a3a78" stroke-width="2.2"/><rect x="365" y="81" width="13" height="3.5" fill="#e8e8f4"/><path d="M362 85.5 H382" stroke="#2e2e66" stroke-width="2"/><path d="M363 92 H381 M363 98 H381" stroke="#9090a8" stroke-width="1.2" opacity="0.6"/><path d="M379 102 l5 -4 h3 l2 3 v6" stroke="#a00808" stroke-width="5" fill="none"/><path d="M379 102 l5 -4 h3 l2 3 v6" stroke="#e83a3a" stroke-width="2" fill="none"/><polygon points="373,95 384,106 373,106" fill="#f8805a" stroke="#a00808" stroke-width="2.2"/><path d="M434 79 h6 v2 h2 v2 h2 v8 h-2 v2 h-10 v-2 h-2 v-8 h2 v-2 h2 z" fill="url(#greeng)" stroke="#2a9a1e" stroke-width="2"/><path d="M428 95 h5 v13 h-3 v-2 h-2 z" fill="url(#greeng)" stroke="#2a9a1e" stroke-width="2"/><circle cx="449" cy="86.5" r="8" fill="#d81414" stroke="#9a0808" stroke-width="1.6"/><path d="M449 80 v13 M442.5 86.5 h13" stroke="#ffe438" stroke-width="2.6"/><path d="M445 82.5 l1.5 1.5 M453 82.5 l-1.5 1.5 M445 90.5 l1.5 -1.5 M453 90.5 l-1.5 -1.5" stroke="#ffe438" stroke-width="2"/><rect x="433.5" y="95" width="24" height="14" fill="#fff" stroke="#505050" stroke-width="2"/><g fill="#0a0a3c"><rect x="436" y="98" width="4.5" height="2"/><rect x="436" y="98" width="2" height="4"/><rect x="436" y="101" width="4.5" height="2"/><rect x="438.5" y="101" width="2" height="5"/><rect x="436" y="104" width="4.5" height="2"/><rect x="442" y="98" width="6" height="2"/><rect x="442" y="104" width="6" height="2"/><rect x="442" y="98" width="2" height="8"/><rect x="446" y="98" width="2" height="8"/><rect x="450" y="98" width="2" height="8"/><rect x="450" y="104" width="4.5" height="2"/></g><g transform="translate(488.5 94.5) rotate(-45)"><rect x="-15" y="-6" width="30" height="12" rx="3" fill="#a0a0a0" opacity="0.5"/></g><g transform="translate(487 93) rotate(-45)"><rect x="-15" y="-6" width="30" height="12" rx="3.5" fill="url(#erg)" stroke="#3a1800" stroke-width="1.8"/></g><rect x="528.5" y="80.5" width="22" height="26" fill="#9c9ca8" opacity="0.6"/><rect x="527" y="79" width="20" height="24" fill="url(#docg)" stroke="#505088" stroke-width="2"/><rect x="530" y="85" width="14" height="2" fill="#7676b0"/><rect x="530" y="89" width="14" height="2" fill="#7676b0"/><rect x="530" y="93" width="14" height="2" fill="#7676b0"/><rect x="530" y="97" width="14" height="2" fill="#7676b0"/><circle cx="528.5" cy="96.5" r="10" fill="url(#clockg)" stroke="#1a5cbf" stroke-width="2.6"/><path d="M528.5 90.0 V96.5 H534.0" stroke="#c01818" stroke-width="2.2" fill="none"/><text x="563" y="95.5" font-family="Liberation Serif" font-size="24" fill="#4a4a4a" stroke="#9a9a9a" stroke-width="0.6" letter-spacing="-1">Aa</text><path d="M574 99 h9 M580 103.5 h9" stroke="#0a940a" stroke-width="2.6"/><polygon points="569.5,99 576,93.5 576,104.5" fill="#0a940a"/><polygon points="594.5,103.5 588,98 588,109" fill="#0a940a"/><g opacity="0.72"><path d="M44 644 H62 V668 H44" stroke="#a8a8b4" stroke-width="2" fill="none" opacity="0.7"/><path d="M42 642 H60 L62 644 V666 L60 668 H42 L40 666 V644 Z" fill="url(#cylg)"/><path d="M41 644 V666" stroke="#5a5aa8" stroke-width="2.2"/><path d="M42 643 H60" stroke="#2e2e66" stroke-width="2.2"/><path d="M61 644 V666" stroke="#1e1e4c" stroke-width="2.2"/><path d="M42 667 H60" stroke="#3a3a78" stroke-width="2.2"/><rect x="45" y="645" width="11" height="3.5" fill="#e8e8f4"/><path d="M42 649.5 H60" stroke="#2e2e66" stroke-width="2"/><path d="M43 656 H59 M43 662 H59" stroke="#9090a8" stroke-width="1.2" opacity="0.6"/><path d="M37 645 V660 H43 M37 650 H43" stroke="#505060" stroke-width="1.8" fill="none"/><rect x="32.8" y="638.8" width="9" height="7" fill="url(#boxg)" stroke="#8a5808" stroke-width="2"/><rect x="42.8" y="646.8" width="9" height="7" fill="url(#boxg)" stroke="#8a5808" stroke-width="2"/><rect x="42.8" y="656" width="9" height="7" fill="url(#boxg)" stroke="#8a5808" stroke-width="2"/></g><polygon points="286,638.5 313.5,651.25 286,664" fill="url(#playg)" stroke="#0b5e0b" stroke-width="2" stroke-linejoin="miter"/><path d="M36.5 715.5 l8 -8" stroke="#101010" stroke-width="2.2" stroke-dasharray="2 1"/><rect x="40.5" y="696" width="16" height="16" rx="4" fill="url(#ping)" stroke="#7a0000" stroke-width="1.4"/><rect x="52" y="688" width="12" height="12" rx="3.5" fill="url(#ping)" stroke="#7a0000" stroke-width="1.4"/><rect x="44" y="699" width="8" height="3" rx="1.5" fill="#ff8a40" opacity="0.8"/><rect x="84" y="694" width="22" height="8" fill="#9a9a9a"/><rect x="87" y="687" width="16" height="15" fill="url(#docg)" stroke="#4a4a88" stroke-width="2"/><path d="M90 691 h10 M90 695 h10 M90 699 h10" stroke="#6a6aa8" stroke-width="1.8"/><rect x="81" y="702" width="28" height="13" fill="url(#printg)" stroke="#262626" stroke-width="2"/><rect x="102" y="705.5" width="4.5" height="2.5" fill="#0a8a0a"/><rect x="84" y="710" width="22" height="2" fill="#7a7a7a"/><rect x="81" y="713.5" width="28" height="2.5" fill="#181818"/><path d="M127 687 H142 V701 H137.5 L135 697.5 L132.5 700 V705 L136.5 711 L134.5 714 L130.5 712 L127 706 L126.5 699 Z" fill="#86ccf8" stroke="#0c48b0" stroke-width="2.2" stroke-linejoin="round"/><path d="M155.5 715 H141 V701 H145 L147.5 704.5 L150 702 V697 L146 691 L148 688 L152 690 L155 696 L156 703 Z" fill="#5ab8f8" stroke="#0c48b0" stroke-width="2.2" stroke-linejoin="round"/><rect x="174.5" y="688.5" width="22" height="25" fill="#9c9ca8" opacity="0.6"/><rect x="173" y="687" width="20" height="23" fill="url(#docg)" stroke="#505088" stroke-width="2"/><rect x="176" y="692" width="14" height="2" fill="#7676b0"/><rect x="176" y="696" width="14" height="2" fill="#7676b0"/><rect x="176" y="700" width="14" height="2" fill="#7676b0"/><rect x="176" y="704" width="14" height="2" fill="#7676b0"/><path d="M185 699 l14 14 M199 699 l-14 14" stroke="#900808" stroke-width="7" stroke-linecap="square"/><path d="M185 699 l14 14 M199 699 l-14 14" stroke="#ff5020" stroke-width="3.6" stroke-linecap="square"/></svg>
</body></html>
